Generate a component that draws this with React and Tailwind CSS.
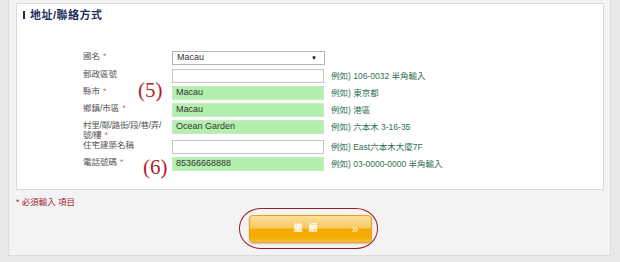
import React from 'react'

const ROWS = [
  { label: '國名', req: true, kind: 'select', value: 'Macau', h: 'h-[18px]' },
  { label: '郵政區號', kind: 'input', value: '', hint: '例如) 106-0032 半角輸入', h: 'h-[17px]' },
  { label: '縣市', req: true, kind: 'input', value: 'Macau', hint: '例如) 東京都', h: 'h-[17px]', mark: '(5)' },
  { label: '鄉鎮/市區', req: true, kind: 'input', value: 'Macau', hint: '例如) 港區', h: 'h-[17px]' },
  { label: ['村里/鄰/路街/段/巷/弄/', '號/樓'], req: true, kind: 'input', value: 'Ocean Garden', hint: '例如) 六本木 3-16-35', h: 'h-[20px]' },
  { label: '住宅建築名稱', kind: 'input', value: '', hint: '例如) East六本木大廈7F', h: 'h-[17px]' },
  { label: '電話號碼', req: true, kind: 'input', value: '85366668888', hint: '例如) 03-0000-0000 半角輸入', h: 'h-[17px]', mark: '(6)' },
]

function Label({ row }) {
  const star = row.req ? <span className="text-[#d86a6a] ml-[3px]">*</span> : null
  if (Array.isArray(row.label)) {
    return (
      <div className="leading-[10px] whitespace-nowrap tracking-[-0.3px]">
        {row.label[0]}
        <br />
        {row.label[1]}
        {star}
      </div>
    )
  }
  return (
    <div className="leading-[10px] whitespace-nowrap">
      {row.label}
      {star}
    </div>
  )
}

function Field({ row }) {
  if (row.kind === 'select') {
    return (
      <div className="w-[153px] h-[14px] border border-[#b4b4b4] bg-white flex items-center justify-between pl-[4px] pr-[7px] text-[9px] text-[#333]">
        <span>{row.value}</span>
        <span className="text-[6px] text-black">▼</span>
      </div>
    )
  }
  const filled = row.value !== ''
  return (
    <div
      className={`w-[152px] h-[14px] border flex items-center pl-[3px] text-[9px] text-[#333] ${
        filled ? 'bg-[#b3f0ad] border-[#c9e8c4]' : 'bg-white border-[#c4c4c4]'
      }`}
    >
      {row.value}
    </div>
  )
}

export default function App() {
  return (
    <div className="w-[620px] h-[262px] bg-[#e8e8e8] pl-[8px] pr-[9px] pb-[6px] font-['Liberation_Sans','Noto_Sans_CJK_TC',sans-serif]">
      <div className="h-full bg-[#f3f3f3] border-x border-b border-[#dcdcdc] pl-[7px] pr-[6px] pt-[3px] flex flex-col">
        <div className="h-[187px] bg-white border border-[#dadada]">
          <div className="h-[22px] pl-[6px] flex items-center gap-[5px]">
            <div className="w-[2px] h-[8px] bg-[#1b2a5c]" />
            <span className="text-[11px] font-bold text-[#1f2d5a] tracking-[0.5px]">地址/聯絡方式</span>
          </div>

          <div className="mt-[25px] pl-[66px] text-[8.5px] text-[#555]">
            {ROWS.map((row, i) => (
              <div key={i} className={`flex items-start ${row.h}`}>
                <div className="relative w-[89px]">
                  <Label row={row} />
                  {row.mark && (
                    <span
                      className={`absolute leading-none text-[21px] text-[#b3202a] font-['Liberation_Serif',serif] ${
                        row.mark === '(5)' ? 'left-[55px] top-[-6px]' : 'left-[60px] top-[0px]'
                      }`}
                    >
                      {row.mark}
                    </span>
                  )}
                </div>
                <Field row={row} />
                {row.hint && (
                  <div className="ml-[7px] h-[14px] flex items-center text-[8.5px] text-[#2e7052] whitespace-nowrap">
                    {row.hint}
                  </div>
                )}
              </div>
            ))}
          </div>
        </div>

        <div className="mt-[7px] text-[8.5px] leading-[10px] text-[#a3283a]">* 必須輸入 項目</div>

        <div className="mt-[8px] flex justify-center">
          <div className="relative">
            <div className="absolute left-[-10px] right-[-6px] top-[-7px] bottom-[-6px] rounded-[22px/20px] border-[1.5px] border-[#9b1c26]" />
            <button className="relative w-[123px] h-[28px] rounded-[4px] border border-[#e9a21a] bg-[linear-gradient(to_bottom,#fbe0a0_0%,#f7c95c_45%,#f4a900_52%,#f6ad05_85%,#f8c040_100%)] shadow-[0_1px_2px_rgba(0,0,0,0.2)] flex items-center">
              <span className="flex-1 pl-[16px] text-center text-[9px] font-bold text-white tracking-[6px]">繼續</span>
              <span className="pr-[12px] text-[12px] leading-none text-[#fff3cf]">»</span>
            </button>
          </div>
        </div>
      </div>
    </div>
  )
}
